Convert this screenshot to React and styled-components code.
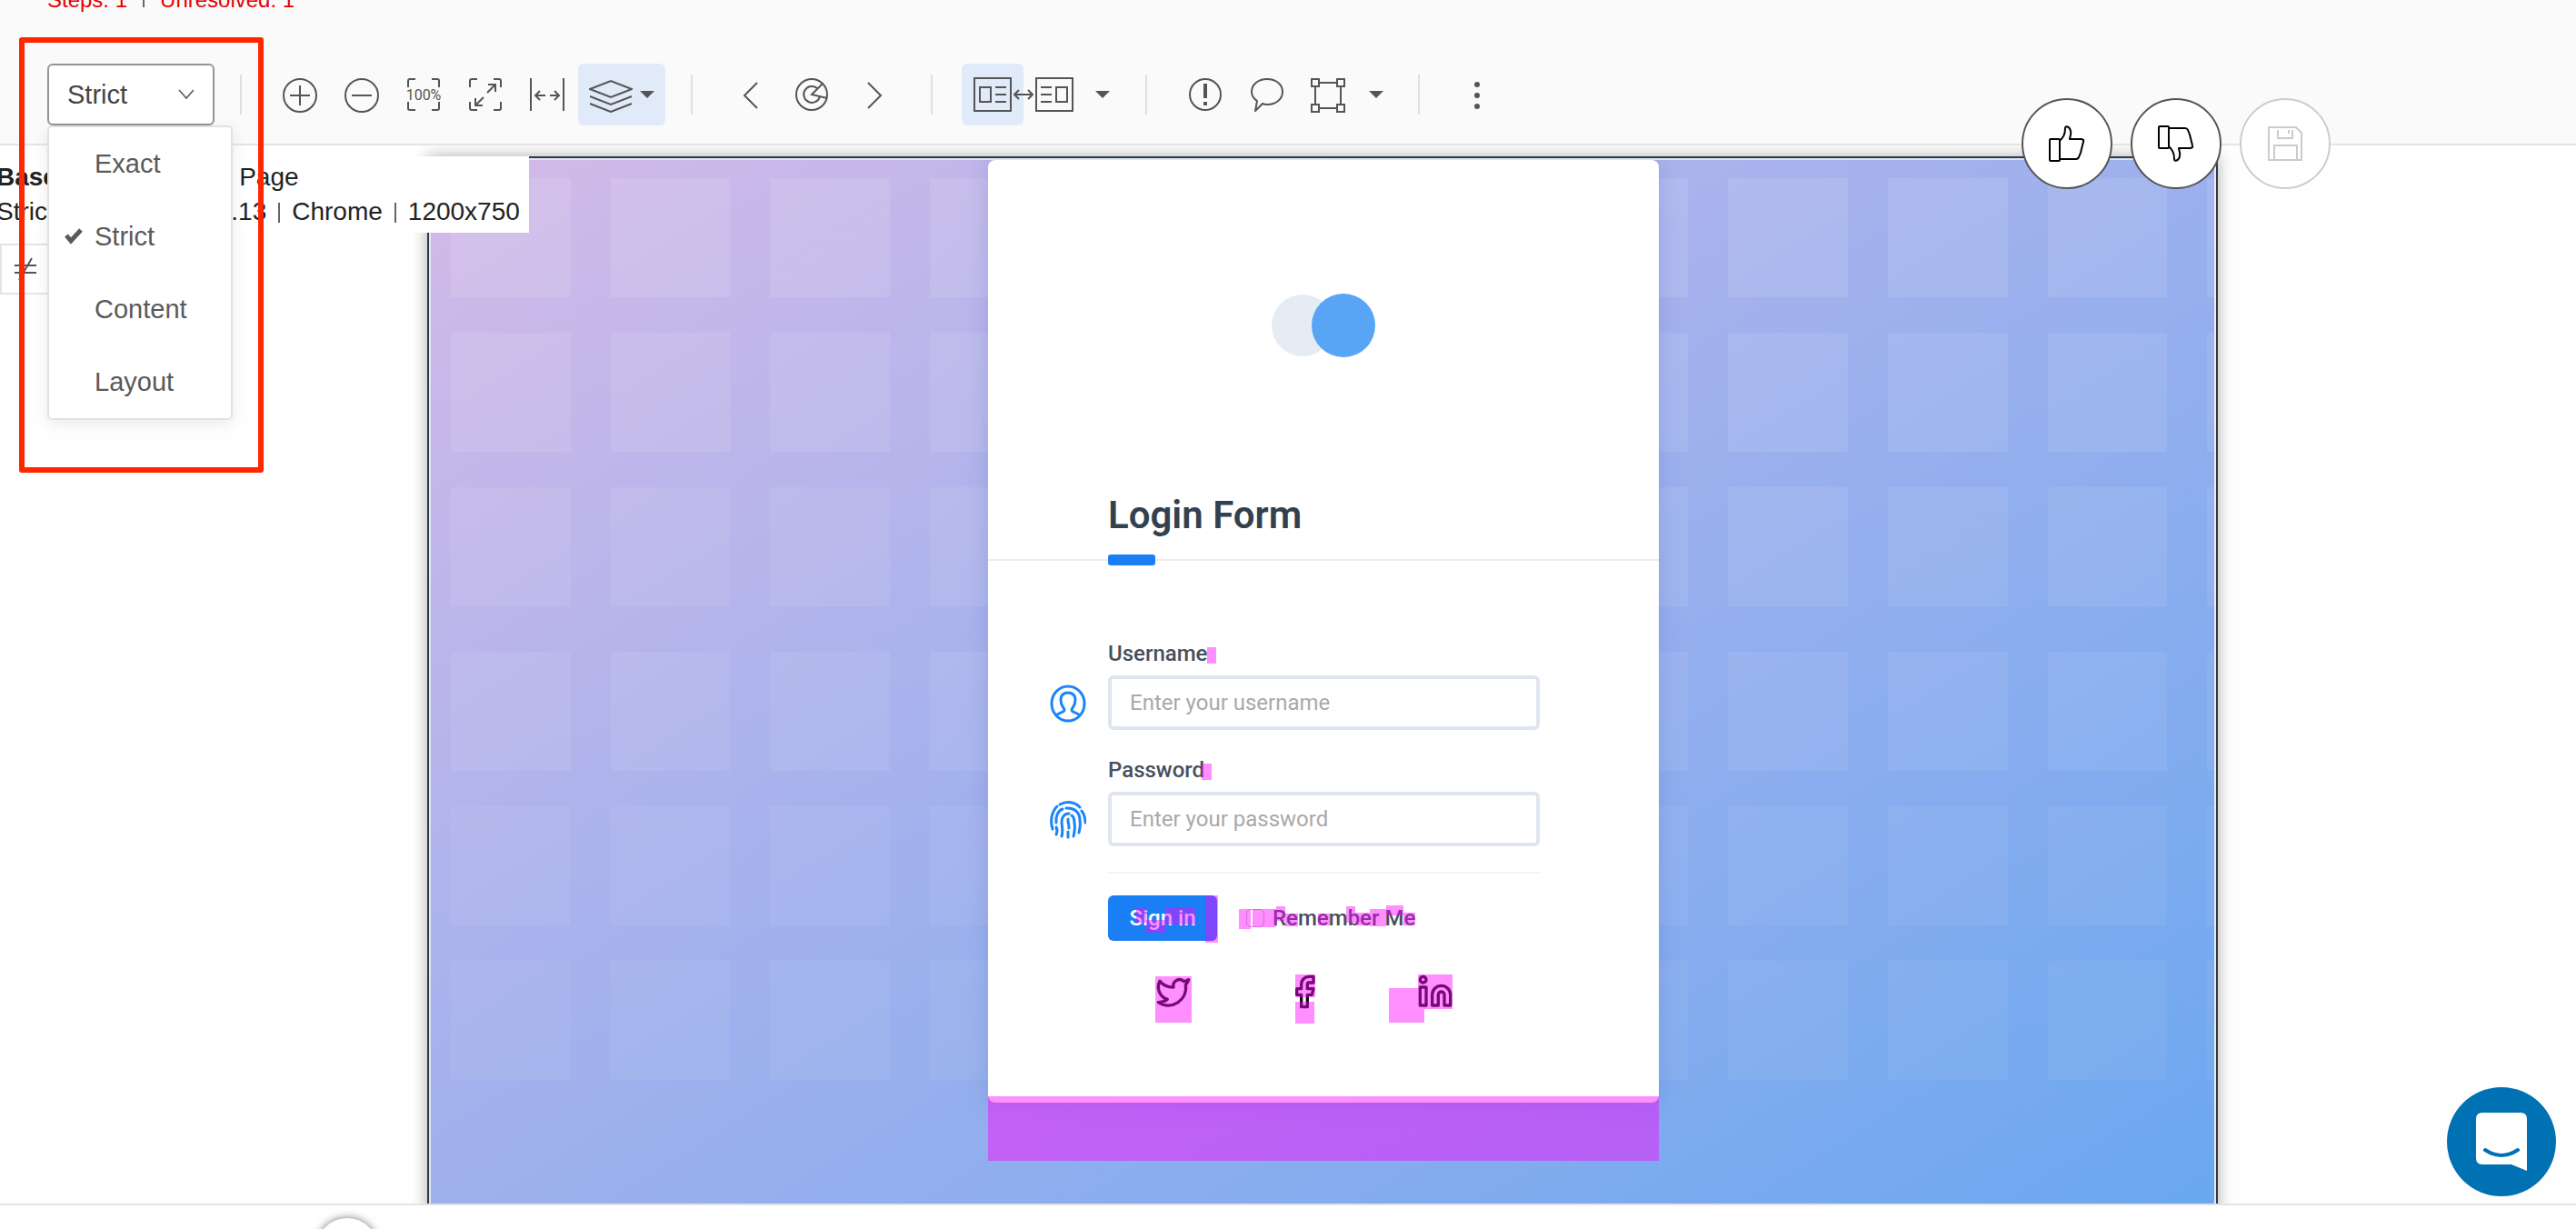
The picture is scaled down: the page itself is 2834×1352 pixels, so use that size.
import React from "react";
import styled, { createGlobalStyle } from "styled-components";
import { Twitter, Facebook, Linkedin } from "lucide-react";

const GlobalStyle = createGlobalStyle`
  *, *::before, *::after { box-sizing: border-box; }
  body { margin: 0; background: #fefefe; }
  button, input, select { font: inherit; }
`;

const ink = "#555555";
const line = "#e4e4e4";
const selected = "#e1eaf9";

/* ---------- shell ---------- */

const Page = styled.div`
  position: relative;
  display: flex;
  flex-direction: column;
  height: 100vh;
  overflow: hidden;
  font-family: "Liberation Sans", Arial, sans-serif;
  font-size: 28px;
  color: #222;
`;

const Header = styled.header`
  position: relative;
  z-index: 3;
  flex: none;
  padding-bottom: 20px;
  background: #fafafa;
  border-bottom: 2px solid ${line};
`;

const Summary = styled.div`
  display: flex;
  align-items: flex-end;
  height: 14px;
  padding-left: 52px;
  overflow: hidden;
  color: #e60000;
  font-size: 24px;
  line-height: 28px;
  white-space: nowrap;
`;

const Bar = styled.span`
  display: inline-block;
  width: 2px;
  height: 22px;
  margin: 0 ${(p) => p.$gap || 13}px;
  background: #666;
  vertical-align: -3px;
`;

const SummaryBar = styled(Bar)`
  margin-bottom: 6px;
`;

const Toolbar = styled.div`
  display: flex;
  align-items: center;
  padding: 56px 52px 0;
`;

/* ---------- match level ---------- */

const LevelPicker = styled.div`
  position: relative;
  display: grid;
  width: 184px;
  height: 68px;
`;

const LevelSelect = styled.select`
  grid-area: 1 / 1;
  appearance: none;
  padding: 0 48px 0 20px;
  border: 2px solid #949494;
  border-radius: 6px;
  background: #fff;
  color: #444;
  font-size: 29px;
`;

const LevelChevron = styled.svg`
  grid-area: 1 / 1;
  place-self: center end;
  margin-right: 22px;
  pointer-events: none;
`;

const LevelMenu = styled.ul`
  position: absolute;
  top: 100%;
  left: 0;
  width: 204px;
  margin: 0;
  padding: 0;
  list-style: none;
  background: #fff;
  border: 2px solid #e2e2e2;
  border-radius: 5px;
  box-shadow: 0 4px 16px rgba(0, 0, 0, 0.08);
`;

const LevelOption = styled.button`
  display: grid;
  grid-template-columns: 20px 1fr;
  column-gap: 13px;
  align-items: center;
  width: 100%;
  height: 80px;
  padding: 0 17px;
  border: 0;
  background: none;
  color: #5a5a5a;
  font-size: 29px;
  text-align: left;
`;

const CheckSlot = styled.span`
  display: flex;
`;

/* ---------- tools ---------- */

const Separator = styled.span`
  flex: none;
  width: 2px;
  height: 44px;
  margin: 0 30px 0 28px;
  background: #dfdfdf;
`;

const Tool = styled.button`
  display: flex;
  align-items: center;
  justify-content: center;
  gap: 8px;
  flex: none;
  width: ${(p) => p.$width || 68}px;
  height: 68px;
  padding: 0;
  border: 0;
  border-radius: 6px;
  background: ${(p) => (p.$on ? selected : "none")};
`;

const SideSwitch = styled.div`
  display: flex;
  align-items: center;
  padding-left: 2px;
`;

const Swap = styled.svg`
  z-index: 1;
  flex: none;
  margin: 0 -11px;
`;

const Glyph = ({ w = 40, h = 40, children, ...rest }) => (
  <svg width={w} height={h} viewBox={`0 0 ${w} ${h}`} fill="none" stroke={ink} strokeWidth="2" aria-hidden="true" {...rest}>
    {children}
  </svg>
);

const Caret = () => (
  <svg width="16" height="8" viewBox="0 0 16 8" aria-hidden="true">
    <path d="M0 0h16L8 8z" fill={ink} />
  </svg>
);

const Corners = () => <path d="M3 12V5q0-2 2-2h6M29 3h6q2 0 2 2v7M37 28v7q0 2-2 2h-6M11 37H5q-2 0-2-2v-7" />;

const ZoomIn = () => (
  <Glyph><circle cx="20" cy="21" r="18" /><path d="M20 10v22M9 21h22" /></Glyph>
);
const ZoomOut = () => (
  <Glyph><circle cx="20" cy="21" r="18" /><path d="M9 21h22" /></Glyph>
);
const ActualSize = () => (
  <Glyph>
    <Corners />
    <text x="20" y="26" textAnchor="middle" fontFamily="Roboto, sans-serif" fontSize="16" fill={ink} stroke="none">100%</text>
  </Glyph>
);
const FitScreen = () => (
  <Glyph>
    <Corners />
    <path d="M22 18l9-9M23 9h8v8M18 23l-9 9M9 24v8h8" />
  </Glyph>
);
const FitWidth = () => (
  <Glyph>
    <path d="M2 2v36M38 2v36M18 21H7M12 16l-5 5 5 5M23 21h10M28 16l5 5-5 5" />
  </Glyph>
);
const Layers = () => (
  <Glyph w={48} h={40}>
    <path d="M1 14L24 5l23 9-23 9zM1 22l23 9 23-9M1 30l23 9 23-9" />
  </Glyph>
);
const Prev = () => <Glyph><path d="M27 7L13 21l14 14" /></Glyph>;
const Next = () => <Glyph><path d="M13 7l14 14-14 14" /></Glyph>;
const Radar = () => (
  <Glyph>
    <circle cx="19" cy="20" r="17" />
    <path d="M25 13a9 9 0 1 0 3 9M31 8L19 20l17 4" />
  </Glyph>
);
const PanelLeft = () => (
  <Glyph w={42} h={38}>
    <path d="M1 1h40v36H1zM7 11h12v16H7zM24 11h12M24 19h12M24 27h12" />
  </Glyph>
);
const PanelRight = () => (
  <Glyph w={42} h={38}>
    <path d="M1 1h40v36H1zM23 11h12v16H23zM6 11h12M6 19h12M6 27h12" />
  </Glyph>
);
const Issue = () => (
  <Glyph>
    <circle cx="20" cy="20" r="17" />
    <path d="M20 8v16M20 28v4" strokeWidth="4" />
  </Glyph>
);
const Comment = () => (
  <Glyph>
    <path d="M20 3c10 0 17 6 17 14s-7 14-17 14q-3 0-5-1l-8 8 2-11q-6-4-6-10C3 9 10 3 20 3z" strokeLinejoin="round" />
  </Glyph>
);
const Region = () => (
  <Glyph>
    <path d="M5 7h28v28H5z" />
    <path d="M1 3h8v8H1zM29 3h8v8h-8zM1 31h8v8H1zM29 31h8v8h-8z" fill="#fafafa" />
  </Glyph>
);
const Dots = () => (
  <Glyph stroke="none" fill={ink}>
    <circle cx="19" cy="9" r="3" /><circle cx="19" cy="21" r="3" /><circle cx="19" cy="33" r="3" />
  </Glyph>
);

/* ---------- review actions ---------- */

const ReviewActions = styled.div`
  position: absolute;
  z-index: 4;
  top: 108px;
  right: 270px;
  display: flex;
  gap: 20px;
`;

const RoundButton = styled.button`
  display: grid;
  place-items: center;
  width: 100px;
  height: 100px;
  padding: 0;
  border: 2px solid ${(p) => (p.disabled ? "#cccccc" : ink)};
  border-radius: 50%;
  background: #fff;
`;

const Thumb = ({ down }) => (
  <Glyph stroke="#000">
    <g transform={down ? "matrix(1 0 0 -1 0 40)" : undefined} strokeLinejoin="round">
      <path d="M2 15h9q1 0 1 1v22q0 1-1 1H2q-1 0-1-1V16q0-1 1-1z" />
      <path d="M12 17c4-4 6-7 6-14 0-3 5-2 6 3 1 4-1 7-1 9h12q4 0 3 3l-1 4-1 4-1 4-2 5q-1 2-3 2H12" />
    </g>
  </Glyph>
);

/* ---------- viewer ---------- */

const Viewer = styled.main`
  position: relative;
  flex: 1;
  min-height: 0;
  padding: 12px 394px 0 470px;
  overflow: hidden;
`;

const InfoColumn = styled.div`
  position: absolute;
  z-index: 2;
  top: 12px;
  left: 0;
  display: flex;
  flex-direction: column;
  align-items: flex-start;
  gap: 12px;
`;

const Info = styled.div`
  margin-left: -4px;
  padding: 4px 10px 4px 0;
  background: #fff;
  line-height: 38px;
  white-space: nowrap;
`;

const DiffToggle = styled.button`
  display: grid;
  place-items: center;
  width: 56px;
  height: 56px;
  padding: 0;
  border: 2px solid ${line};
  background: #fff;
`;

const Frame = styled.div`
  border: 2px solid #34383f;
  box-shadow: 0 0 16px rgba(0, 0, 0, 0.32);
`;

const Capture = styled.div`
  position: relative;
  display: flex;
  justify-content: center;
  align-items: flex-start;
  height: 1230px;
  padding-left: 2px;
  overflow: hidden;
  border: 2px solid rgba(255, 255, 255, 0.7);
  background: linear-gradient(to bottom right, #d4bae8 0%, #a2b1ed 44%, #67a7f0 100%);
  font-family: Roboto, sans-serif;
  font-size: 24px;
`;

const TileField = styled.div`
  position: absolute;
  inset: 20px -124px auto 22px;
  display: flex;
  flex-direction: column;
  gap: 50px;
`;

const TileGrid = styled.div`
  display: grid;
  grid-template-columns: repeat(12, 1fr);
  grid-auto-rows: 131px;
  gap: 39px 44px;
`;

const Tile = styled.span`
  background: rgba(255, 255, 255, ${(p) => p.$alpha});
`;

/* ---------- login card ---------- */

const Card = styled.section`
  position: relative;
  width: 738px;
  background: #fff;
  border-radius: 8px;
  box-shadow: 0 0 24px rgba(70, 100, 190, 0.25);
`;

const CardHead = styled.div`
  display: flex;
  flex-direction: column;
  padding: 147px 132px 0;
  border-bottom: 2px solid #ececee;
`;

const Emblem = styled.svg`
  align-self: center;
`;

const Title = styled.h1`
  margin: 150px 0 19px;
  color: #33414f;
  font-size: 42px;
  font-weight: 600;
  line-height: 48px;
`;

const Accent = styled.span`
  width: 52px;
  height: 12px;
  margin-bottom: -7px;
  border-radius: 3px;
  background: #1a7ff5;
`;

const Form = styled.form`
  display: flex;
  flex-direction: column;
  gap: 28px;
  padding: 86px 131px 102px 68px;
`;

const Field = styled.div`
  display: grid;
  grid-template-columns: 40px 1fr;
  gap: 8px 24px;
  align-items: center;
  color: #1a85fb;
`;

const FieldLabel = styled.label`
  grid-column: 2;
  color: #454f5e;
  font-weight: 500;
  line-height: 32px;
`;

const TextBox = styled.input`
  min-width: 0;
  height: 60px;
  padding: 0 20px;
  border: 4px solid #dfe5ef;
  border-radius: 6px;
  background: #fff;
  color: #333;
  &::placeholder { color: #a9a9a9; opacity: 1; }
`;

const Foot = styled.div`
  margin-left: 64px;
  padding-top: 24px;
  border-top: 2px solid #f3f3f5;
`;

const Actions = styled.div`
  display: flex;
  align-items: center;
  gap: 32px;
`;

const SignIn = styled.button`
  width: 120px;
  height: 50px;
  padding: 0;
  border: 0;
  border-radius: 6px;
  background: #1a7ff5;
  color: #fff;
  font-weight: 500;
`;

const Remember = styled.label`
  display: flex;
  align-items: center;
  gap: 9px;
  color: #454f5e;
  font-weight: 500;
`;

const Tick = styled.input`
  appearance: none;
  width: 20px;
  height: 20px;
  margin: 0;
  border: 1px solid #b9b9c4;
  border-radius: 5px;
  background: #fff;
`;

const Socials = styled.nav`
  display: flex;
  gap: 104px;
  padding: 36px 0 0 52px;
`;

const SocialLink = styled.a`
  display: flex;
  color: #111;
`;

const Diff = styled.span`
  position: absolute;
  left: ${(p) => p.$x}px;
  top: ${(p) => p.$y}px;
  width: ${(p) => p.$w}px;
  height: ${(p) => p.$h}px;
  background: rgba(255, 0, 255, 0.44);
  pointer-events: none;
`;

const UserIcon = () => (
  <svg width="40" height="44" viewBox="0 0 40 44" fill="none" stroke="currentColor" strokeWidth="3" aria-hidden="true">
    <ellipse cx="20" cy="23" rx="18" ry="19" />
    <path d="M7 36c2-3 9-3 9-6 0-2-4-4-4-11 0-6 4-8 8-8s8 2 8 8c0 7-4 9-4 11 0 3 7 3 9 6" />
  </svg>
);

const FingerprintIcon = () => (
  <svg width="40" height="44" viewBox="0 0 40 44" fill="none" stroke="currentColor" strokeWidth="3" strokeLinecap="round" aria-hidden="true">
    <path d="M3 33C0 24 2 14 8 8M11 6c7-4 17-3 22 3M35 13c3 4 4 8 4 13" />
    <path d="M7 26c-1-7 2-13 7-15M18 10c9-1 15 5 15 13 1 6 0 10-1 14M7 31q2 4 0 8" />
    <path d="M13 41c2-6 0-11 0-16 0-5 3-9 8-9M24 18c3 2 3 5 3 8 1 6 0 11-1 15" />
    <path d="M20 22v3c1 3 1 5 1 7M20 36v6" />
  </svg>
);

/* ---------- overlays and footer ---------- */

const Timeline = styled.footer`
  flex: none;
  height: 28px;
  overflow: hidden;
  border-top: 2px solid ${line};
  background: #fff;
`;

const Knob = styled.button`
  display: block;
  width: 68px;
  height: 68px;
  margin: 14px 0 0 348px;
  border: 0;
  border-radius: 50%;
  background: #fff;
  box-shadow: 0 0 10px rgba(0, 0, 0, 0.55);
`;

const ChatButton = styled.button`
  position: absolute;
  z-index: 4;
  right: 22px;
  bottom: 36px;
  display: grid;
  place-items: center;
  width: 120px;
  height: 120px;
  padding: 0;
  border: 0;
  border-radius: 50%;
  background: #0071b2;
`;

const Highlight = styled.div`
  position: absolute;
  z-index: 5;
  top: 41px;
  left: 21px;
  width: 269px;
  height: 479px;
  border: 6px solid #ff2600;
  border-radius: 3px;
  pointer-events: none;
`;

const levels = ["Exact", "Strict", "Content", "Layout"];

const diffs = [
  [241, 536, 10, 18],
  [235, 664, 11, 18],
  [239, 809, 14, 52],
  [163, 823, 11, 16],
  [174, 836, 21, 14],
  [195, 822, 33, 19],
  [276, 824, 13, 22],
  [291, 824, 26, 20],
  [317, 821, 10, 16],
  [327, 829, 14, 14],
  [363, 829, 13, 13],
  [394, 821, 10, 18],
  [404, 828, 16, 14],
  [420, 824, 18, 19],
  [438, 820, 19, 11],
  [457, 828, 13, 14],
  [184, 898, 40, 51],
  [338, 896, 22, 25],
  [338, 926, 21, 24],
  [473, 896, 38, 38],
  [441, 911, 32, 38],
  [473, 934, 7, 15],
  [0, 1030, 738, 71],
];

const Tiles = ({ alphas }) => (
  <TileGrid>
    {alphas.flatMap((a, row) =>
      Array.from({ length: 12 }, (_, col) => <Tile key={`${row}-${col}`} $alpha={a} />)
    )}
  </TileGrid>
);

export default function App() {
  return (
    <>
      <GlobalStyle />
      <Page>
        <Header>
          <Summary>
            Steps: 1<SummaryBar $gap={17} />Unresolved: 1
          </Summary>
          <Toolbar>
            <LevelPicker>
              <LevelSelect aria-label="Match level" defaultValue="Strict">
                {levels.map((l) => <option key={l}>{l}</option>)}
              </LevelSelect>
              <LevelChevron width="18" height="12" viewBox="0 0 18 12" fill="none" stroke={ink} strokeWidth="1.5">
                <path d="M1 1l8 9 8-9" />
              </LevelChevron>
              <LevelMenu>
                {levels.map((l) => (
                  <li key={l}>
                    <LevelOption type="button">
                      <CheckSlot>
                        {l === "Strict" && (
                          <svg width="20" height="18" viewBox="0 0 20 18" fill="none" stroke="#5a5a5a" strokeWidth="5">
                            <path d="M2 8l5 6L18 2" />
                          </svg>
                        )}
                      </CheckSlot>
                      {l}
                    </LevelOption>
                  </li>
                ))}
              </LevelMenu>
            </LevelPicker>

            <Separator />
            <Tool aria-label="Zoom in"><ZoomIn /></Tool>
            <Tool aria-label="Zoom out"><ZoomOut /></Tool>
            <Tool aria-label="Actual size"><ActualSize /></Tool>
            <Tool aria-label="Fit to screen"><FitScreen /></Tool>
            <Tool aria-label="Fit to width"><FitWidth /></Tool>
            <Tool aria-label="Layers" $width={96} $on><Layers /><Caret /></Tool>

            <Separator />
            <Tool aria-label="Previous difference"><Prev /></Tool>
            <Tool aria-label="Show differences"><Radar /></Tool>
            <Tool aria-label="Next difference"><Next /></Tool>

            <Separator />
            <SideSwitch>
              <Tool aria-label="Show baseline" $on><PanelLeft /></Tool>
              <Swap width="22" height="12" viewBox="0 0 22 12" fill="none" stroke={ink} strokeWidth="2">
                <path d="M1 6h20M6 1L1 6l5 5M16 1l5 5-5 5" />
              </Swap>
              <Tool aria-label="Show checkpoint"><PanelRight /></Tool>
              <Tool aria-label="View options" $width={38}><Caret /></Tool>
            </SideSwitch>

            <Separator />
            <Tool aria-label="Report an issue"><Issue /></Tool>
            <Tool aria-label="Add a remark"><Comment /></Tool>
            <Tool aria-label="Add a region"><Region /></Tool>
            <Tool aria-label="Region options" $width={36}><Caret /></Tool>

            <Separator />
            <Tool aria-label="More"><Dots /></Tool>
          </Toolbar>
        </Header>

        <Viewer>
          <InfoColumn>
            <Info>
              <div><b>Baseline:</b> Test Login Page</div>
              <div>
                Strict<Bar />Mac OS X 10.13<Bar />Chrome<Bar />1200x750
              </div>
            </Info>
            <DiffToggle aria-label="Unequal">
              <Glyph w={24} h={26}><path d="M0 9h24M0 17h24M19 1L5 25" /></Glyph>
            </DiffToggle>
          </InfoColumn>

          <Frame>
            <Capture>
              <TileField>
                <Tiles alphas={[0.1, 0.09, 0.08]} />
                <Tiles alphas={[0.07, 0.06, 0.05]} />
              </TileField>
              <Card>
                <CardHead>
                  <Emblem width="116" height="70" viewBox="0 0 116 70">
                    <circle cx="35" cy="35" r="34" fill="#e5ecf4" />
                    <circle cx="80" cy="35" r="35" fill="#57a5f4" />
                  </Emblem>
                  <Title>Login Form</Title>
                  <Accent />
                </CardHead>
                <Form onSubmit={(e) => e.preventDefault()}>
                  <Field>
                    <FieldLabel htmlFor="username">Username</FieldLabel>
                    <UserIcon />
                    <TextBox id="username" placeholder="Enter your username" />
                  </Field>
                  <Field>
                    <FieldLabel htmlFor="password">Password</FieldLabel>
                    <FingerprintIcon />
                    <TextBox id="password" type="password" placeholder="Enter your password" />
                  </Field>
                  <Foot>
                    <Actions>
                      <SignIn>Sign in</SignIn>
                      <Remember>
                        <Tick type="checkbox" />
                        Remember Me
                      </Remember>
                    </Actions>
                    <Socials>
                      <SocialLink href="#twitter" aria-label="Twitter"><Twitter size={40} /></SocialLink>
                      <SocialLink href="#facebook" aria-label="Facebook"><Facebook size={40} /></SocialLink>
                      <SocialLink href="#linkedin" aria-label="LinkedIn"><Linkedin size={40} /></SocialLink>
                    </Socials>
                  </Foot>
                </Form>
                {diffs.map(([x, y, w, h]) => (
                  <Diff key={`${x}-${y}`} $x={x} $y={y} $w={w} $h={h} />
                ))}
              </Card>
            </Capture>
          </Frame>
        </Viewer>

        <Timeline>
          <Knob aria-label="Expand timeline" />
        </Timeline>

        <ReviewActions>
          <RoundButton aria-label="Accept"><Thumb /></RoundButton>
          <RoundButton aria-label="Reject"><Thumb down /></RoundButton>
          <RoundButton aria-label="Save" disabled>
            <Glyph stroke="#cccccc">
              <path d="M2 2h30l6 6v30H2zM12 5v9h16V5M24 5v4M8 38V22h25v16" />
            </Glyph>
          </RoundButton>
        </ReviewActions>

        <ChatButton aria-label="Chat">
          <svg width="56" height="64" viewBox="0 0 56 64">
            <path d="M7 0h42q7 0 7 7v57l-17-7H7q-7 0-7-7V7q0-7 7-7z" fill="#fff" />
            <path d="M10 41q18 12 36 0" fill="none" stroke="#0071b2" strokeWidth="4" strokeLinecap="round" />
          </svg>
        </ChatButton>

        <Highlight />
      </Page>
    </>
  );
}
